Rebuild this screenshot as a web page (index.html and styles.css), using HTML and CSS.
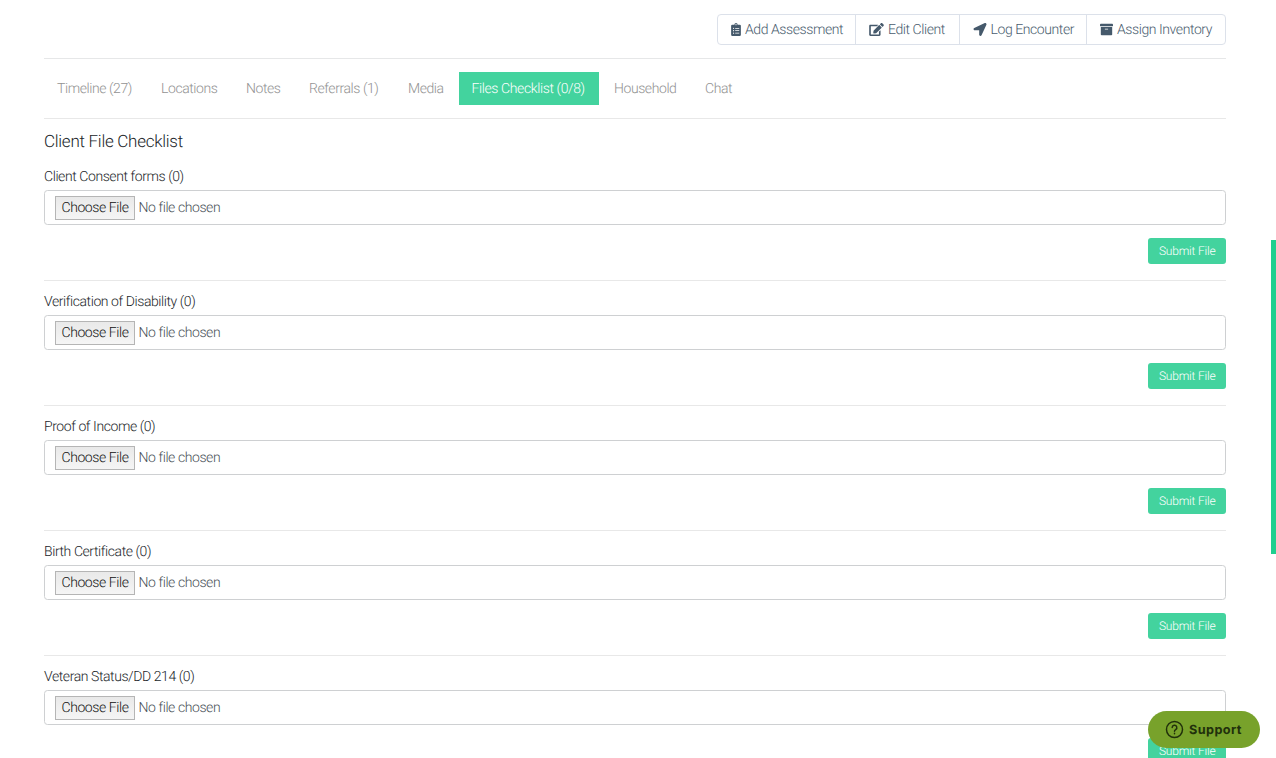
FILE: index.html
```html
<!DOCTYPE html>
<html lang="en">
<head>
<meta charset="utf-8">
<title>Client File Checklist</title>
<link rel="stylesheet" href="styles.css">
</head>
<body>
<main class="page">
  <div class="toolbar">
    <div class="button-group">
      <a class="action add"><svg class="icon clipboard" viewBox="0 0 384 512"><path fill-rule="evenodd" d="M336 64h-80a64 64 0 0 0-128 0H48a48 48 0 0 0-48 48v352a48 48 0 0 0 48 48h288a48 48 0 0 0 48-48V112a48 48 0 0 0-48-48zM96 424a24 24 0 1 1 0-48 24 24 0 0 1 0 48zm0-96a24 24 0 1 1 0-48 24 24 0 0 1 0 48zm0-96a24 24 0 1 1 0-48 24 24 0 0 1 0 48zm96-192a24 24 0 1 1 0 48 24 24 0 0 1 0-48zM160 386v28h160v-28zM160 290v28h160v-28zM160 194v28h160v-28z"/></svg><span>Add Assessment</span></a>
      <a class="action edit"><svg class="icon pencil" viewBox="0 0 576 512"><path d="M402.600 83.200l90.200 90.200c3.800 3.800 3.800 10 0 13.800L274.400 405.600l-92.800 10.300c-12.400 1.400-22.900-9.100-21.500-21.500l10.300-92.800L388.800 83.200c3.800-3.800 10-3.800 13.800 0zm162-22.900l-48.800-48.800c-15.200-15.200-39.900-15.200-55.200 0l-35.400 35.400c-3.800 3.800-3.800 10 0 13.800l90.200 90.200c3.800 3.800 10 3.800 13.800 0l35.400-35.400c15.200-15.300 15.200-40 0-55.200zM384 346.200V448H64V128h229.800c3.200 0 6.200-1.300 8.500-3.500l40-40c7.600-7.600 2.200-20.500-8.500-20.500H48C21.500 64 0 85.500 0 112v352c0 26.500 21.500 48 48 48h352c26.500 0 48-21.500 48-48V306.200c0-10.700-12.900-16-20.500-8.500l-40 40c-2.200 2.300-3.500 5.300-3.500 8.500z"/></svg><span>Edit Client</span></a>
      <a class="action log"><svg class="icon arrow" viewBox="0 0 512 512"><path d="M444.500 3.500L28.700 195.400c-48 22.400-32 92.800 19.200 92.800h175.900v175.900c0 51.200 70.400 67.200 92.800 19.200l191.900-415.800c16-38.400-25.600-80-64-64z"/></svg><span>Log Encounter</span></a>
      <a class="action assign"><svg class="icon box" viewBox="0 0 512 512"><path fill-rule="evenodd" d="M32 448c0 17.700 14.300 32 32 32h384c17.700 0 32-14.300 32-32V160H32zm160-212c0-6.600 5.400-12 12-12h104c6.600 0 12 5.400 12 12v8c0 6.600-5.400 12-12 12H204c-6.600 0-12-5.400-12-12zM480 32H32C14.300 32 0 46.300 0 64v48c0 8.800 7.200 16 16 16h480c8.800 0 16-7.200 16-16V64c0-17.700-14.300-32-32-32z"/></svg><span>Assign Inventory</span></a>
    </div>
  </div>
  <nav class="tabs">
    <a class="tab timeline">Timeline (27)</a>
    <a class="tab locations">Locations</a>
    <a class="tab notes">Notes</a>
    <a class="tab referrals">Referrals (1)</a>
    <a class="tab media">Media</a>
    <a class="tab files active">Files Checklist (0/8)</a>
    <a class="tab household">Household</a>
    <a class="tab chat">Chat</a>
  </nav>
  <h1 class="title">Client File Checklist</h1>
  <section class="entry"><div class="label">Client Consent forms (0)</div><div class="file"><span class="choose">Choose File</span><span class="none">No file chosen</span></div><div class="submit">Submit File</div></section>
  <section class="entry"><div class="label">Verification of Disability (0)</div><div class="file"><span class="choose">Choose File</span><span class="none">No file chosen</span></div><div class="submit">Submit File</div></section>
  <section class="entry"><div class="label">Proof of Income (0)</div><div class="file"><span class="choose">Choose File</span><span class="none">No file chosen</span></div><div class="submit">Submit File</div></section>
  <section class="entry"><div class="label">Birth Certificate (0)</div><div class="file"><span class="choose">Choose File</span><span class="none">No file chosen</span></div><div class="submit">Submit File</div></section>
  <section class="entry"><div class="label">Veteran Status/DD 214 (0)</div><div class="file"><span class="choose">Choose File</span><span class="none">No file chosen</span></div><div class="submit">Submit File</div></section>
</main>
<div class="scroll-thumb"></div>
<div class="support"><svg class="help" viewBox="0 0 18 18"><circle cx="9" cy="9" r="7.600"/><path d="M6.800 7.200a2.200 2.200 0 1 1 3.300 1.900c-.7.400-1.100.8-1.100 1.500"/><path d="M9 12.500v.6"/></svg><span>Support</span></div>
</body>
</html>
```

FILE: styles.css
```css
* { box-sizing: border-box; }
html { height: 100%; overflow: hidden; }
body { margin: 0; height: 758px; overflow: hidden; background: #fff; color: #212529; font: 300 14px/18px Roboto, sans-serif; letter-spacing: -.42px; text-rendering: geometricPrecision; }
.page { padding: 0 50px 0 44px; }
.toolbar { display: flex; justify-content: flex-end; height: 59px; padding-top: 14px; border-bottom: 1px solid #e6e7e8; }
.button-group { display: flex; height: 31px; border: 1px solid #dce1ea; border-radius: 4px; color: #495c6e; }
.action { display: flex; align-items: center; padding-left: 12px; white-space: nowrap; }
.action span { padding-top: 1px; }
.action + .action { border-left: 1px solid #dce1ea; }
.add { width: 137px; }
.edit { width: 103.500px; padding-left: 13px; }
.log { width: 127.500px; padding-left: 13px; }
.assign { width: 139px; padding-left: 13px; }
.icon { height: 13px; fill: #45596b; flex: none; }
.clipboard { width: 12px; margin-right: 3px; }
.pencil { width: 15px; margin-right: 4px; }
.arrow { width: 14px; margin-right: 4px; }
.box { width: 13px; margin-right: 4px; }
.tabs { display: flex; gap: 2.5px; height: 60px; padding-top: 13px; border-bottom: 1px solid #e8e8e8; color: #929292; }
.tab { height: 33px; padding: 0 13px; line-height: 35px; white-space: nowrap; }
.timeline { width: 101.500px; }
.locations { width: 82.500px; }
.notes { width: 60.500px; }
.referrals { width: 96.500px; }
.media { width: 61px; }
.files { width: 140px; letter-spacing: -.39px; }
.household { width: 88.500px; }
.active { background: #43d39e; color: #fff; }
.title { margin: 0; height: 37px; padding-top: 12px; font-size: 17px; font-weight: 300; letter-spacing: -.27px; line-height: 22px; }
.entry { display: flex; flex-direction: column; height: 125.100px; padding-top: 12px; border-bottom: 1px solid #e8e8e8; }
.label { height: 18px; flex: none; margin-bottom: 4px; }
.file { display: flex; flex: none; align-items: center; height: 35px; padding-left: 10px; border: 1px solid #ced0d2; border-radius: 3.500px; color: #495057; }
.choose { width: 80px; height: 24px; border: 1px solid #b5b5b5; background: linear-gradient(#e9e9e9, #f5f5f5); color: #111; line-height: 23px; text-align: center; }
.none { margin-left: 3.500px; line-height: 18px; padding-top: 1px; }
.submit { flex: none; align-self: flex-end; width: 77.600px; height: 25.500px; margin-top: 13px; border-radius: 3px; background: #43d39e; color: #fff; font-size: 12px; letter-spacing: -.2px; line-height: 26px; text-align: center; }
.scroll-thumb { position: fixed; left: 1271px; top: 240px; width: 5px; height: 313.500px; background: #20cf8f; }
.support { position: fixed; left: 1148px; top: 711px; display: flex; align-items: center; width: 112px; height: 37px; padding-left: 17px; border-radius: 19px; background: #78a22b; color: #21300b; font: 700 12.700px/18px Inter, sans-serif; letter-spacing: .4px; }
.support span { padding-top: 2px; }
.help { width: 19px; height: 19px; margin-right: 5px; fill: none; stroke: #21300b; stroke-width: 1.400; stroke-linecap: round; }
```
